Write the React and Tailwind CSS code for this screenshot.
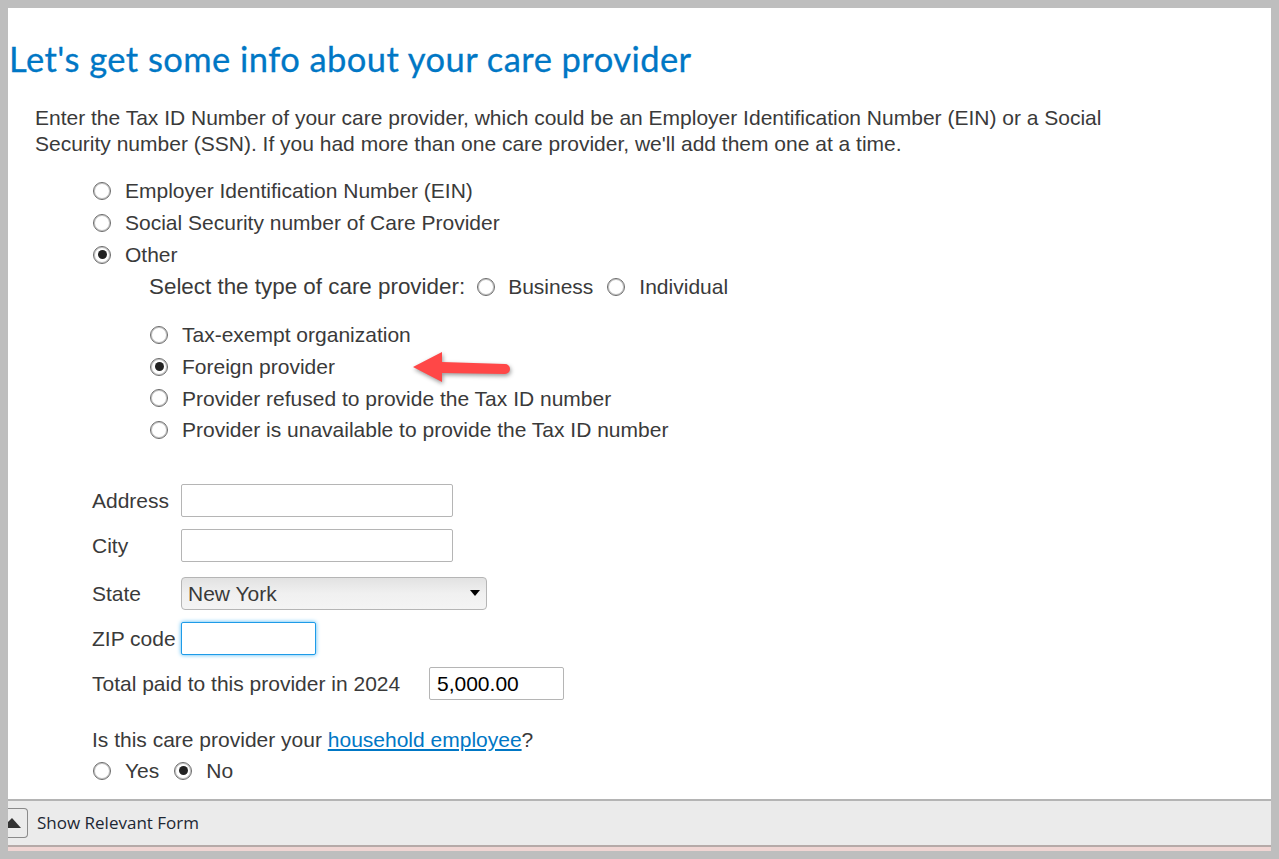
import React from "react";

const Radio = ({ checked }) => (
  <span className="w-[18px] h-[18px] rounded-full border border-[#6b6b6b] shadow-[inset_0_0_0_1px_#c4c4c4] bg-white flex items-center justify-center shrink-0">
    {checked && <span className="w-[9px] h-[9px] rounded-full bg-[#222]" />}
  </span>
);

const RadioRow = ({ label, checked, className = "" }) => (
  <div className={`flex items-center gap-[14px] h-[31.7px] ${className}`}>
    <Radio checked={checked} />
    <span>{label}</span>
  </div>
);

const Field = ({ label, labelWidth = "w-[89px]", width, value, focused, className = "" }) => (
  <div className={`flex items-center ${className}`}>
    <span className={`${labelWidth} shrink-0`}>{label}</span>
    <div
      className={`${width} h-[33px] bg-white rounded-[2px] border flex items-center pl-[7px] text-black ${
        focused ? "border-[#1e9be8] shadow-[0_0_4px_#4db8f5]" : "border-[#b5b5b5]"
      }`}
    >
      {value}
    </div>
  </div>
);

const App = () => {
  return (
    <div className="w-[1279px] h-[859px] bg-[#bebebe] p-2 font-['Liberation_Sans',Arial,sans-serif] text-[21px] text-[#3a3a3a] overflow-hidden">
      <div className="relative h-[843px] bg-white flex flex-col">
        <div className="flex-1 overflow-hidden">
          <h1 className="pt-[28px] pl-px text-[34.5px] leading-[46px] text-[#0077c5] font-['Lato',sans-serif] tracking-[0.45px] [-webkit-text-stroke:0.3px_#0077c5]">
            Let's get some info about your care provider
          </h1>

          <p className="mt-[23px] ml-[27px] w-[1090px] leading-[26px]">
            Enter the Tax ID Number of your care provider, which could be an Employer Identification Number (EIN) or a Social Security number (SSN). If you had more than one care provider, we'll add them one at a time.
          </p>

          <div className="mt-[18.4px] ml-[85px]">
            <RadioRow label="Employer Identification Number (EIN)" />
            <RadioRow label="Social Security number of Care Provider" />
            <RadioRow label="Other" checked />

            <div className="ml-[56px] flex items-center h-[32px] mt-[0.6px]">
              <span className="text-[22.4px] mr-[12px]">Select the type of care provider:</span>
              <Radio />
              <span className="ml-[13px] mr-[14px]">Business</span>
              <Radio />
              <span className="ml-[14px]">Individual</span>
            </div>

            <div className="ml-[57px] mt-[16px]">
              <RadioRow label="Tax-exempt organization" />
              <RadioRow label="Foreign provider" checked />
              <RadioRow label="Provider refused to provide the Tax ID number" />
              <RadioRow label="Provider is unavailable to provide the Tax ID number" />
            </div>

            <div className="-ml-px">
              <Field className="mt-[38px]" label="Address" width="w-[272px]" />
              <Field className="mt-[12px]" label="City" width="w-[272px]" />

              <div className="flex items-center mt-[15px]">
                <span className="w-[89px] shrink-0">State</span>
                <div className="w-[306px] h-[33px] rounded-[4px] border border-[#b5b5b5] bg-gradient-to-b from-[#e2e2e2] via-[#f0f0f0] to-[#f4f4f4] flex items-center justify-between pl-[6px] pr-[6px]">
                  <span>New York</span>
                  <span className="w-0 h-0 border-x-[5px] border-x-transparent border-t-[6px] border-t-black" />
                </div>
              </div>

              <Field className="mt-[12px]" label="ZIP code" width="w-[135px]" focused />
              <Field className="mt-[12px]" label="Total paid to this provider in 2024" labelWidth="w-[337px]" width="w-[135px]" value="5,000.00" />

              <p className="mt-[27px] leading-[26px]">
                Is this care provider your{" "}
                <a href="#" className="text-[#0077c5] underline">household employee</a>?
              </p>
            </div>

            <div className="flex items-center mt-[2px] h-[32px]">
              <Radio />
              <span className="ml-[14px] mr-[15px]">Yes</span>
              <Radio checked />
              <span className="ml-[14px]">No</span>
            </div>
          </div>
        </div>

        <div className="h-[46px] shrink-0 border-t-2 border-[#b4b4b4] bg-[#ebebeb] flex items-center">
          <button className="w-[20px] h-[30px] -mt-[1px] bg-[#ebebeb] border border-l-0 border-[#8a8a8a] rounded-r-[4px] overflow-hidden flex items-center justify-start">
            <svg width="14" height="10" viewBox="0 0 14 10" className="shrink-0">
              <path d="M4 0 L13 10 L0 10 L0 4 Z" fill="#333" />
            </svg>
          </button>
          <span className="ml-[9px] text-[17px] text-[#1c2733] font-['Open_Sans',sans-serif]">Show Relevant Form</span>
        </div>
        <div className="h-[6px] shrink-0 border-t-2 border-[#b5aaa8] bg-[#f0d5d3]" />

        <svg className="absolute left-[400px] top-[340px]" width="120" height="40" viewBox="0 0 120 40">
          <path
            d="M5 19 L34 4 L34 14 L97 16 a5 5 0 0 1 0 10 L34 25 L34 34 Z"
            fill="#ff4747"
            style={{ filter: "drop-shadow(1px 2px 2px rgba(0,0,0,0.4))" }}
          />
        </svg>
      </div>
    </div>
  );
};

export default App;
